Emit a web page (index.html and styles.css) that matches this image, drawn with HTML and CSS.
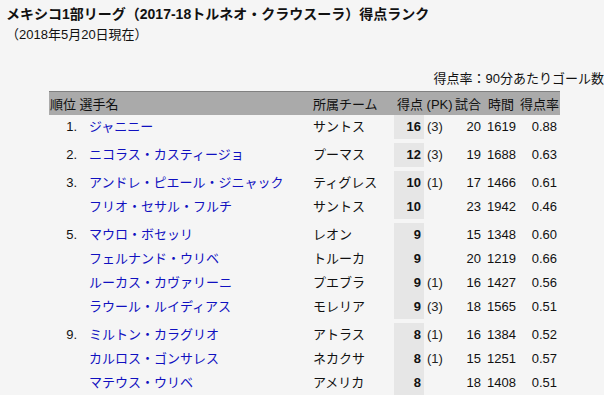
FILE: index.html
```html
<!DOCTYPE html>
<html lang="ja">
<head>
<meta charset="utf-8">
<link rel="stylesheet" href="styles.css">
</head>
<body>
<div class="page">
  <h1 class="title">メキシコ1部リーグ（2017-18トルネオ・クラウスーラ）得点ランク</h1>
  <p class="sub">（2018年5月20日現在）</p>
  <p class="note">得点率：90分あたりゴール数</p>
  <table class="rank">
    <colgroup>
      <col class="c-rank"><col class="c-name"><col class="c-team"><col class="c-goal"><col class="c-pk"><col class="c-games"><col class="c-time"><col class="c-rate">
    </colgroup>
    <thead>
      <tr>
        <th colspan="2" class="l">順位 選手名</th>
        <th class="l team">所属チーム</th>
        <th colspan="2" class="l goalh">得点 (PK)</th>
        <th class="r">試合</th>
        <th class="r">時間</th>
        <th class="r">得点率</th>
      </tr>
    </thead>
    <tbody class="grp first">
      <tr><td class="pos">1.</td><td class="name"><a href="#">ジャニニー</a></td><td class="team">サントス</td><td class="goal">16</td><td class="pk">(3)</td><td class="num">20</td><td class="num">1619</td><td class="num">0.88</td></tr>
    </tbody>
    <tbody class="grp">
      <tr><td class="pos">2.</td><td class="name"><a href="#">ニコラス・カスティージョ</a></td><td class="team">プーマス</td><td class="goal">12</td><td class="pk">(3)</td><td class="num">19</td><td class="num">1688</td><td class="num">0.63</td></tr>
    </tbody>
    <tbody class="grp">
      <tr><td class="pos">3.</td><td class="name"><a href="#">アンドレ・ピエール・ジニャック</a></td><td class="team">ティグレス</td><td class="goal">10</td><td class="pk">(1)</td><td class="num">17</td><td class="num">1466</td><td class="num">0.61</td></tr>
      <tr><td class="pos"></td><td class="name"><a href="#">フリオ・セサル・フルチ</a></td><td class="team">サントス</td><td class="goal">10</td><td class="pk"></td><td class="num">23</td><td class="num">1942</td><td class="num">0.46</td></tr>
    </tbody>
    <tbody class="grp">
      <tr><td class="pos">5.</td><td class="name"><a href="#">マウロ・ボセッリ</a></td><td class="team">レオン</td><td class="goal">9</td><td class="pk"></td><td class="num">15</td><td class="num">1348</td><td class="num">0.60</td></tr>
      <tr><td class="pos"></td><td class="name"><a href="#">フェルナンド・ウリベ</a></td><td class="team">トルーカ</td><td class="goal">9</td><td class="pk"></td><td class="num">20</td><td class="num">1219</td><td class="num">0.66</td></tr>
      <tr><td class="pos"></td><td class="name"><a href="#">ルーカス・カヴァリーニ</a></td><td class="team">プエブラ</td><td class="goal">9</td><td class="pk">(1)</td><td class="num">16</td><td class="num">1427</td><td class="num">0.56</td></tr>
      <tr><td class="pos"></td><td class="name"><a href="#">ラウール・ルイディアス</a></td><td class="team">モレリア</td><td class="goal">9</td><td class="pk">(3)</td><td class="num">18</td><td class="num">1565</td><td class="num">0.51</td></tr>
    </tbody>
    <tbody class="grp">
      <tr><td class="pos">9.</td><td class="name"><a href="#">ミルトン・カラグリオ</a></td><td class="team">アトラス</td><td class="goal">8</td><td class="pk">(1)</td><td class="num">16</td><td class="num">1384</td><td class="num">0.52</td></tr>
      <tr><td class="pos"></td><td class="name"><a href="#">カルロス・ゴンサレス</a></td><td class="team">ネカクサ</td><td class="goal">8</td><td class="pk">(1)</td><td class="num">15</td><td class="num">1251</td><td class="num">0.57</td></tr>
      <tr><td class="pos"></td><td class="name"><a href="#">マテウス・ウリベ</a></td><td class="team">アメリカ</td><td class="goal">8</td><td class="pk"></td><td class="num">18</td><td class="num">1408</td><td class="num">0.51</td></tr>
    </tbody>
  </table>
</div>
</body>
</html>
```

FILE: styles.css
```css
html, body {
  margin: 0;
  padding: 0;
  background: #f5f5f5;
}
body {
  font-family: "Liberation Sans", "Noto Sans CJK JP", sans-serif;
  font-size: 13px;
  color: #111;
}
.page {
  padding: 4px 0 0 6px;
}
.title {
  margin: 0;
  font-size: 14px;
  line-height: 20px;
  font-weight: bold;
}
.sub {
  margin: 1px 0 0 0;
  line-height: 20px;
}
.note {
  margin: 24px 0 0 0;
  line-height: 20px;
  text-align: right;
}
.rank {
  margin: 2px 0 0 43px;
  width: 511px;
  table-layout: fixed;
  border-collapse: separate;
  border-spacing: 0;
}
.c-rank { width: 31px; }
.c-name { width: 230px; }
.c-team { width: 84px; }
.c-goal { width: 30px; }
.c-pk { width: 28px; }
.c-games { width: 32px; }
.c-time { width: 33px; }
.c-rate { width: 43px; }

.rank th {
  background: #aaaaaa;
  border-top: 1px solid #808080;
  height: 23px;
  padding: 0 3px;
  font-weight: normal;
  white-space: nowrap;
  color: #111;
}
.rank th.l { text-align: left; padding-left: 1px; }
.rank th.team, .rank th.goalh { padding-left: 3px; }
.rank th.r { text-align: right; }

.rank td {
  height: 24px;
  padding: 0 3px;
  white-space: nowrap;
  line-height: 24px;
}
.rank .grp tr:first-child td {
  border-top: 4px solid transparent;
  background-clip: padding-box;
}
.rank .grp.first tr:first-child td {
  border-top-width: 0;
}
.rank .pos { text-align: right; }
.rank .name { padding-left: 9px; }
.name a { color: #1010c0; text-decoration: none; }
.rank .goal {
  text-align: right;
  font-weight: bold;
  background: #e6e6e6;
}
.rank .pk { color: #222; }
.rank .num { text-align: right; }
```
